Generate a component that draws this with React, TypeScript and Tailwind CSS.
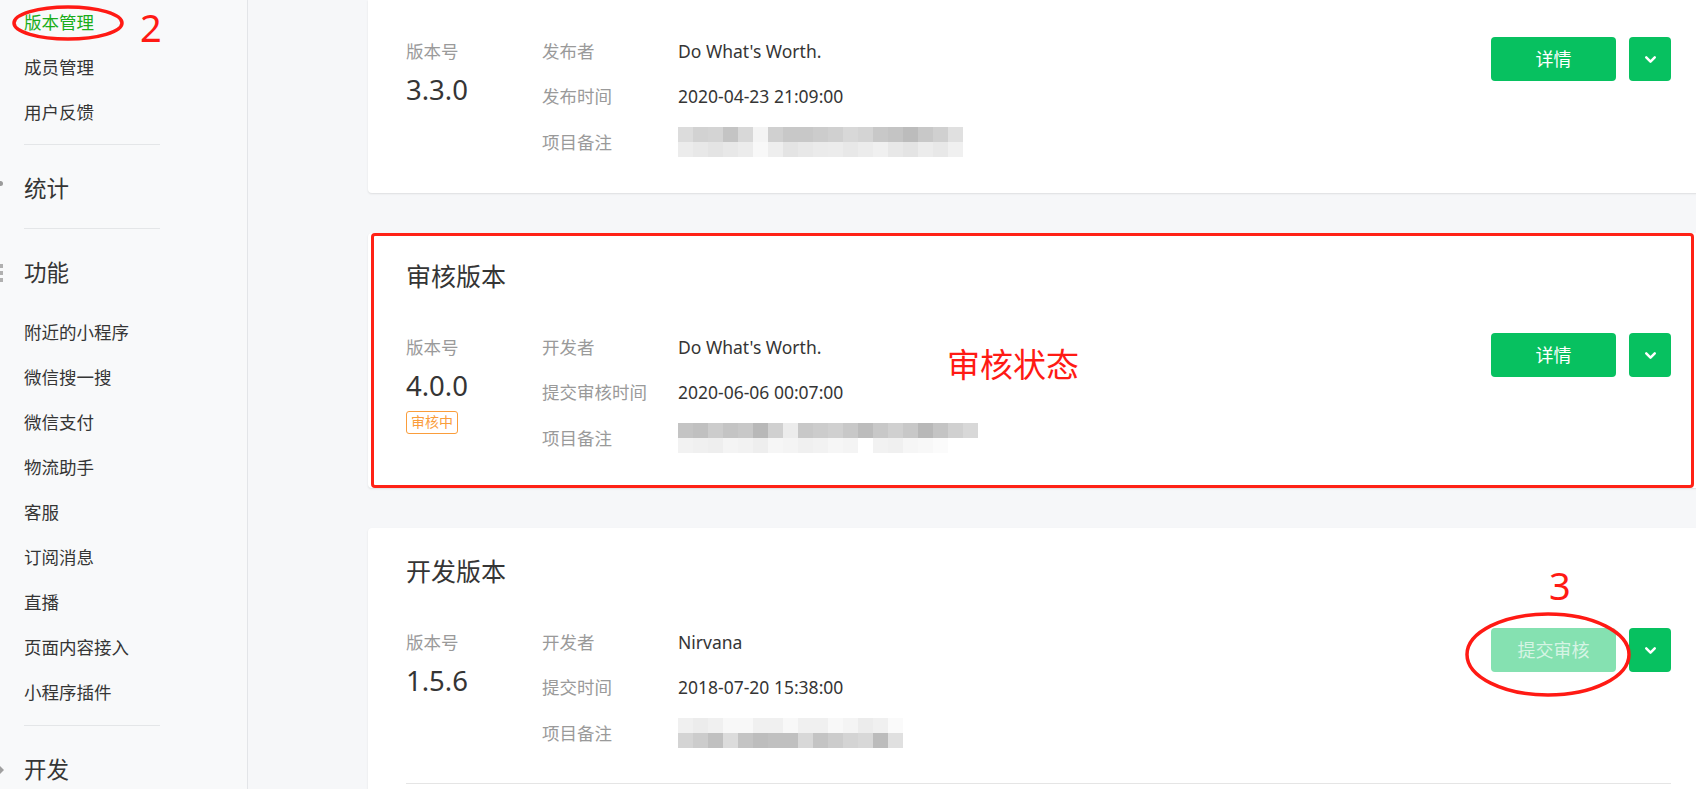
import { ChevronDown } from 'lucide-react';

type MosaicProps = { top: string[]; bottom: string[] };

function Mosaic({ top, bottom }: MosaicProps) {
  return (
    <div className="flex flex-col">
      <div className="flex">
        {top.map((c, i) => (
          <div key={i} className="h-[15px] w-[15px]" style={{ background: c }} />
        ))}
      </div>
      <div className="flex">
        {bottom.map((c, i) => (
          <div key={i} className="h-[15px] w-[15px]" style={{ background: c }} />
        ))}
      </div>
    </div>
  );
}

const m1 = {
  top: ['#dcdcdc', '#d2d2d2', '#d4d4d4', '#c4c4c4', '#d8d8d8', '#f4f4f4', '#d0d0d0', '#c8c8c8', '#c8c8c8', '#cccccc', '#d0d0d0', '#d8d8d8', '#d4d4d4', '#c8c8c8', '#c4c4c4', '#bcbcbc', '#c8c8c8', '#d0d0d0', '#e0e0e0'],
  bottom: ['#ececec', '#e8e8e8', '#e4e4e4', '#e8e8e8', '#ececec', '#f8f8f8', '#eeeeee', '#e4e4e4', '#e8e8e8', '#ebebeb', '#ececec', '#e8e8e8', '#ececec', '#f0f0f0', '#e8e8e8', '#e4e4e4', '#ececec', '#e8e8e8', '#f0f0f0'],
};
const m2 = {
  top: ['#c4c4c4', '#c0c0c0', '#cccccc', '#c4c4c4', '#c8c8c8', '#b8b8b8', '#d0d0d0', '#ececec', '#c8c8c8', '#cccccc', '#d0d0d0', '#c8c8c8', '#bcbcbc', '#c8c8c8', '#d0d0d0', '#c8c8c8', '#b8b8b8', '#c4c4c4', '#d0d0d0', '#d8d8d8'],
  bottom: ['#f2f2f2', '#f0f0f0', '#eeeeee', '#f4f4f4', '#f2f2f2', '#eeeeee', '#f6f6f6', '#f4f4f4', '#f0f0f0', '#f2f2f2', '#f6f6f6', '#f4f4f4', '#ffffff', '#f2f2f2', '#f0f0f0', '#f6f6f6', '#f8f8f8', '#fbfbfb', '#ffffff', '#ffffff'],
};
const m3 = {
  top: ['#f0f0f0', '#ececec', '#f0f0f0', '#f8f8f8', '#f8f8f8', '#f0f0f0', '#f0f0f0', '#f8f8f8', '#f0f0f0', '#f0f0f0', '#f8f8f8', '#f4f4f4', '#ececec', '#f0f0f0', '#fafafa'],
  bottom: ['#d4d4d4', '#cccccc', '#c0c0c0', '#dcdcdc', '#c4c4c4', '#bdbdbd', '#c0c0c0', '#c0c0c0', '#d8d8d8', '#c4c4c4', '#cccccc', '#d4d4d4', '#d8d8d8', '#bcbcbc', '#e0e0e0'],
};

function SideItem({ children, active }: { children: React.ReactNode; active?: boolean }) {
  return (
    <div className={`flex h-[45px] items-center text-[17.5px] ${active ? 'text-[#1aad19]' : 'text-[#353535]'}`}>
      {children}
    </div>
  );
}

function Divider({ className }: { className: string }) {
  return <div className={`h-px bg-[#e4e6e8] ${className}`} />;
}

function Heading({ children, icon, className }: { children: React.ReactNode; icon: React.ReactNode; className: string }) {
  return (
    <div className={`-ml-6 flex h-[22px] items-center ${className}`}>
      <span className="flex w-6 items-center">{icon}</span>
      <span className="text-[22.5px] leading-[22px] text-[#353535]">{children}</span>
    </div>
  );
}

type Row = { label: string; value?: string; mosaic?: MosaicProps };

function InfoRows({ rows }: { rows: Row[] }) {
  return (
    <div className="flex flex-col">
      {rows.map((r) => (
        <div key={r.label} className="flex h-[45.5px] items-center">
          <div className="w-[136px] text-[17.5px] text-[#9a9a9a]">{r.label}</div>
          {r.mosaic ? (
            <Mosaic top={r.mosaic.top} bottom={r.mosaic.bottom} />
          ) : (
            <div className="text-[17.5px] text-[#353535]">{r.value}</div>
          )}
        </div>
      ))}
    </div>
  );
}

function Buttons({ label, disabled }: { label: string; disabled?: boolean }) {
  return (
    <div className="ml-auto mt-[9px] flex gap-[13px]">
      <button
        className={`flex h-[44px] w-[125px] items-center justify-center rounded-[4px] text-[18px] ${
          disabled ? 'bg-[#85e1b1] text-[#d6f4e4]' : 'bg-[#07c160] text-white'
        }`}
      >
        {label}
      </button>
      <button className="flex h-[44px] w-[42px] items-center justify-center rounded-[4px] bg-[#07c160] text-white">
        <ChevronDown size={17} strokeWidth={3.5} />
      </button>
    </div>
  );
}

function VersionCol({ version, badge }: { version: string; badge?: boolean }) {
  return (
    <div className="flex w-[136px] flex-col">
      <div className="flex h-[45.5px] items-center text-[17.5px] text-[#9a9a9a]">版本号</div>
      <div className="text-[27.5px] leading-[32px] text-[#353535]">{version}</div>
      {badge && (
        <div className="mt-[9px] flex h-[23px] w-[52px] items-center justify-center rounded-[3px] border border-[#fa9d3b] text-[14px] leading-none text-[#fa9d3b]">
          审核中
        </div>
      )}
    </div>
  );
}

export default function App() {
  return (
    <div className="relative flex h-[789px] w-[1696px] overflow-hidden bg-[#f6f7f9] font-['Noto_Sans','Noto_Sans_CJK_SC',sans-serif]">
      <aside className="w-[248px] shrink-0 border-r border-[#e3e5e8] bg-[#f8f9fa]">
        <div className="pl-6 pr-[87px]">
          <SideItem active>版本管理</SideItem>
          <SideItem>成员管理</SideItem>
          <SideItem>用户反馈</SideItem>
          <Divider className="mt-[9px]" />
          <Heading className="mb-[28px] mt-[33px]" icon={<span className="mb-[12px] h-[5px] w-[3px] rounded-r-full bg-[#9b9b9b]" />}>
            统计
          </Heading>
          <Divider className="" />
          <Heading
            className="mt-[33px]"
            icon={
              <span className="flex flex-col gap-[3px]">
                <span className="h-[4px] w-[3px] bg-[#b0b0b0]" />
                <span className="h-[4px] w-[3px] bg-[#b0b0b0]" />
                <span className="h-[4px] w-[3px] bg-[#b0b0b0]" />
              </span>
            }
          >
            功能
          </Heading>
          <div className="mt-[25.5px]">
            <SideItem>附近的小程序</SideItem>
            <SideItem>微信搜一搜</SideItem>
            <SideItem>微信支付</SideItem>
            <SideItem>物流助手</SideItem>
            <SideItem>客服</SideItem>
            <SideItem>订阅消息</SideItem>
            <SideItem>直播</SideItem>
            <SideItem>页面内容接入</SideItem>
            <SideItem>小程序插件</SideItem>
          </div>
          <Divider className="mt-[10px]" />
          <Heading
            className="mt-[33px]"
            icon={<span className="h-0 w-0 border-y-[4px] border-l-[4px] border-y-transparent border-l-[#a0a0a0]" />}
          >
            开发
          </Heading>
        </div>
      </aside>

      <main className="flex-1 overflow-hidden pl-[120px]">
        <div className="flex w-[1341px] flex-col gap-10">
          {/* Card 1 */}
          <section className="rounded-b-[4px] bg-white px-[38px] pb-[28.5px] pt-[28px] shadow-[0_1px_2px_rgba(0,0,0,0.1)]">
            <div className="flex">
              <VersionCol version="3.3.0" />
              <InfoRows
                rows={[
                  { label: '发布者', value: "Do What's Worth." },
                  { label: '发布时间', value: '2020-04-23 21:09:00' },
                  { label: '项目备注', mosaic: m1 },
                ]}
              />
              <Buttons label="详情" />
            </div>
          </section>

          {/* Card 2 */}
          <section className="rounded-[4px] bg-white px-[38px] pb-[27px] pt-[27px] shadow-[0_1px_2px_rgba(0,0,0,0.1)]">
            <h2 className="text-[25px] leading-[32px] text-[#353535]">审核版本</h2>
            <div className="mt-[32px] flex">
              <VersionCol version="4.0.0" badge />
              <InfoRows
                rows={[
                  { label: '开发者', value: "Do What's Worth." },
                  { label: '提交审核时间', value: '2020-06-06 00:07:00' },
                  { label: '项目备注', mosaic: m2 },
                ]}
              />
              <Buttons label="详情" />
            </div>
          </section>

          {/* Card 3 */}
          <section className="rounded-[4px] bg-white px-[38px] pt-[27.5px] shadow-[0_1px_2px_rgba(0,0,0,0.1)]">
            <h2 className="text-[25px] leading-[32px] text-[#353535]">开发版本</h2>
            <div className="mt-[32px] flex">
              <VersionCol version="1.5.6" />
              <InfoRows
                rows={[
                  { label: '开发者', value: 'Nirvana' },
                  { label: '提交时间', value: '2018-07-20 15:38:00' },
                  { label: '项目备注', mosaic: m3 },
                ]}
              />
              <Buttons label="提交审核" disabled />
            </div>
            <div className="mt-[27px] h-px bg-[#e5e5e5]" />
            <div className="h-[60px]" />
          </section>
        </div>
      </main>

      {/* Annotations */}
      <svg className="absolute left-[11px] top-[4px]" width="114" height="38" viewBox="0 0 114 38">
        <ellipse cx="57" cy="19" rx="54" ry="16" fill="none" stroke="#ff1a14" strokeWidth="3.5" />
      </svg>
      <div className="absolute left-[140px] top-[8px] font-['Noto_Sans',sans-serif] text-[38px] leading-none text-[#ff1a14]">2</div>

      <div className="absolute left-[371px] top-[233px] h-[255px] w-[1323px] rounded-[4px] border-[3px] border-[#ff2216]" />
      <div className="absolute left-[947px] top-[347px] font-['Noto_Sans_CJK_SC',sans-serif] text-[33px] leading-none text-[#ff1a14]">审核状态</div>

      <svg className="absolute left-[1464px] top-[611px]" width="168" height="87" viewBox="0 0 168 87">
        <ellipse cx="84" cy="43.5" rx="81" ry="40.5" fill="none" stroke="#ff1a14" strokeWidth="3.5" />
      </svg>
      <div className="absolute left-[1549px] top-[566px] font-['Noto_Sans',sans-serif] text-[38px] leading-none text-[#ff1a14]">3</div>
    </div>
  );
}
